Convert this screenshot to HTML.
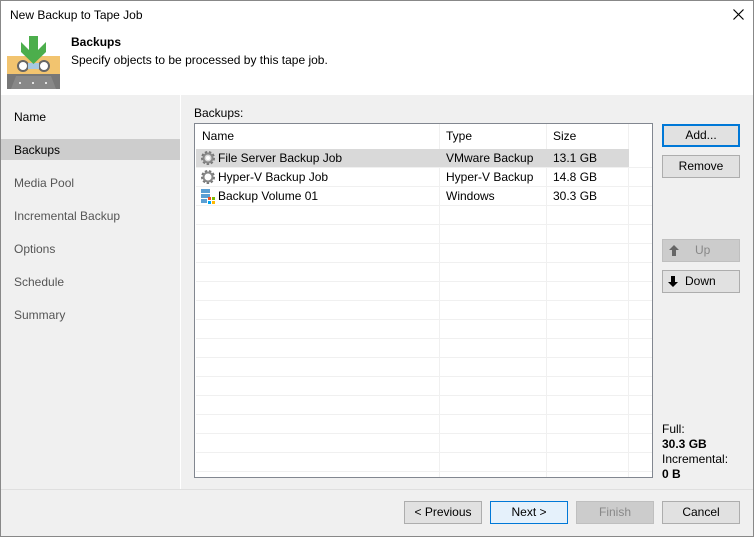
<!DOCTYPE html><html><head><style>
*{margin:0;padding:0;box-sizing:border-box}
body{width:754px;height:537px;overflow:hidden;font-family:"Liberation Sans",sans-serif;font-size:12px;color:#000;background:#f0f0f0;position:relative}
.a{position:absolute}
.win{left:0;top:0;width:754px;height:537px;border:1px solid #888}
.btn{position:absolute;border:1px solid #adadad;background:#e1e1e1;text-align:center;line-height:20px;height:23px;width:78px}
.nav{left:14px;font-size:12px}
.row{position:absolute;left:1px;width:456px;height:19px;border-bottom:1px solid #f0f0f0;line-height:18px}
.c{position:absolute;top:0}
</style></head><body>
<svg width="0" height="0" style="position:absolute"><defs><g id="gear"><circle cx="8" cy="8" r="5.5" fill="none" stroke="#777" stroke-width="3" stroke-dasharray="2.2 1.6"/><circle cx="8" cy="8" r="4.5" fill="none" stroke="#888" stroke-width="2"/><circle cx="8" cy="8" r="2" fill="#fff"/></g></defs></svg>
<div class="a" style="left:0;top:0;width:754px;height:95px;background:#fff"></div>
<div class="a" style="left:10px;top:8px;font-size:12px">New Backup to Tape Job</div>
<svg class="a" style="left:733px;top:9px" width="11" height="11"><path d="M0.5 0.5L10.5 10.5M10.5 0.5L0.5 10.5" stroke="#000" stroke-width="1.2"/></svg>
<svg class="a" style="left:7px;top:36px" width="53" height="53" viewBox="0 0 53 53">
<rect x="0" y="20" width="53" height="33" fill="#f2c46f"/>
<rect x="0" y="38" width="53" height="15" fill="#777"/>
<polygon points="4,53 9,40 44,40 49,53" fill="#888"/>
<circle cx="16" cy="30" r="5" fill="#fff" stroke="#666" stroke-width="2"/>
<circle cx="37" cy="30" r="5" fill="#fff" stroke="#666" stroke-width="2"/>
<rect x="21" y="27" width="11" height="6" fill="#a8c8e0"/>
<polygon points="22,0 31,0 31,14 39,6 39,16 26.5,28 14,16 14,6 22,14" fill="#4cae4c"/>
<circle cx="13" cy="47" r="1" fill="#fff"/><circle cx="26" cy="47" r="1" fill="#fff"/><circle cx="39" cy="47" r="1" fill="#fff"/>
</svg>
<div class="a" style="left:71px;top:35px;font-weight:bold">Backups</div>
<div class="a" style="left:71px;top:53px">Specify objects to be processed by this tape job.</div>
<div class="a" style="left:180px;top:95px;width:1px;height:394px;background:#fff"></div>
<div class="a" style="left:0;top:139px;width:180px;height:21px;background:#cdcdcd"></div>
<div class="a nav" style="top:110px">Name</div>
<div class="a nav" style="top:143px">Backups</div>
<div class="a nav" style="top:176px;color:#555">Media Pool</div>
<div class="a nav" style="top:209px;color:#555">Incremental Backup</div>
<div class="a nav" style="top:242px;color:#555">Options</div>
<div class="a nav" style="top:275px;color:#555">Schedule</div>
<div class="a nav" style="top:308px;color:#555">Summary</div>
<div class="a" style="left:194px;top:106px">Backups:</div>
<div class="a" style="left:194px;top:123px;width:459px;height:355px;background:#fff;border:1px solid #828790;overflow:hidden">
<div class="a" style="left:244px;top:0;width:1px;height:355px;background:#f0f0f0"></div>
<div class="a" style="left:351px;top:0;width:1px;height:355px;background:#f0f0f0"></div>
<div class="a" style="left:433px;top:0;width:1px;height:355px;background:#f0f0f0"></div>
<div class="row" style="top:0;height:24px;line-height:24px;border:0"><span class="c" style="left:6px">Name</span><span class="c" style="left:250px">Type</span><span class="c" style="left:357px">Size</span></div>
<div class="row" style="top:25px"><div class="a" style="left:0;top:0;width:433px;height:18px;background:#d9d9d9"></div></div>
<div class="row" style="top:25px;border:0"><svg class="c" style="left:4px;top:1px" width="16" height="16"><use href="#gear"/></svg><span class="c" style="left:22px">File Server Backup Job</span><span class="c" style="left:250px">VMware Backup</span><span class="c" style="left:357px">13.1 GB</span></div>
<div class="row" style="top:44px"><svg class="c" style="left:4px;top:1px" width="16" height="16"><use href="#gear"/></svg><span class="c" style="left:22px">Hyper-V Backup Job</span><span class="c" style="left:250px">Hyper-V Backup</span><span class="c" style="left:357px">14.8 GB</span></div>
<div class="row" style="top:63px"><svg class="c" style="left:5px;top:2px" width="16" height="16"><rect x="0" y="0" width="9" height="4" fill="#5a9fd4"/><rect x="0" y="5" width="9" height="4" fill="#5a9fd4"/><rect x="0" y="10" width="6" height="4" fill="#5a9fd4"/><rect x="7" y="8" width="3" height="3" fill="#f25022"/><rect x="11" y="8" width="3" height="3" fill="#7fba00"/><rect x="7" y="12" width="3" height="3" fill="#00a4ef"/><rect x="11" y="12" width="3" height="3" fill="#ffb900"/></svg><span class="c" style="left:22px">Backup Volume 01</span><span class="c" style="left:250px">Windows</span><span class="c" style="left:357px">30.3 GB</span></div>
<div class="row" style="top:82px"></div><div class="row" style="top:101px"></div><div class="row" style="top:120px"></div><div class="row" style="top:139px"></div><div class="row" style="top:158px"></div><div class="row" style="top:177px"></div><div class="row" style="top:196px"></div><div class="row" style="top:215px"></div><div class="row" style="top:234px"></div><div class="row" style="top:253px"></div><div class="row" style="top:272px"></div><div class="row" style="top:291px"></div><div class="row" style="top:310px"></div><div class="row" style="top:329px"></div>
</div>
<div class="btn" style="left:662px;top:124px;border:2px solid #0078d7;line-height:19px">Add...</div>
<div class="btn" style="left:662px;top:155px">Remove</div>
<div class="btn" style="left:662px;top:239px;background:#ccc;color:#888;border-color:#bfbfbf;text-align:left"><svg class="a" style="left:6px;top:5px" width="10" height="11"><path d="M5 0L10 5H7V11H3V5H0Z" fill="#666"/></svg><span class="a" style="left:32px">Up</span></div>
<div class="btn" style="left:662px;top:270px;text-align:left"><svg class="a" style="left:5px;top:5px" width="10" height="11"><path d="M5 11L10 6H7V0H3V6H0Z" fill="#000"/></svg><span class="a" style="left:22px">Down</span></div>
<div class="a" style="left:662px;top:422px">Full:</div>
<div class="a" style="left:662px;top:437px;font-weight:bold">30.3 GB</div>
<div class="a" style="left:662px;top:452px">Incremental:</div>
<div class="a" style="left:662px;top:467px;font-weight:bold">0 B</div>
<div class="a" style="left:0;top:489px;width:754px;height:1px;background:#dfdfdf"></div>
<div class="btn" style="left:404px;top:501px">&lt; Previous</div>
<div class="btn" style="left:490px;top:501px;background:#e5f1fb;border-color:#0078d7">Next &gt;</div>
<div class="btn" style="left:576px;top:501px;background:#ccc;color:#888;border-color:#bfbfbf">Finish</div>
<div class="btn" style="left:662px;top:501px">Cancel</div>
<div class="a win"></div>
</body></html>
